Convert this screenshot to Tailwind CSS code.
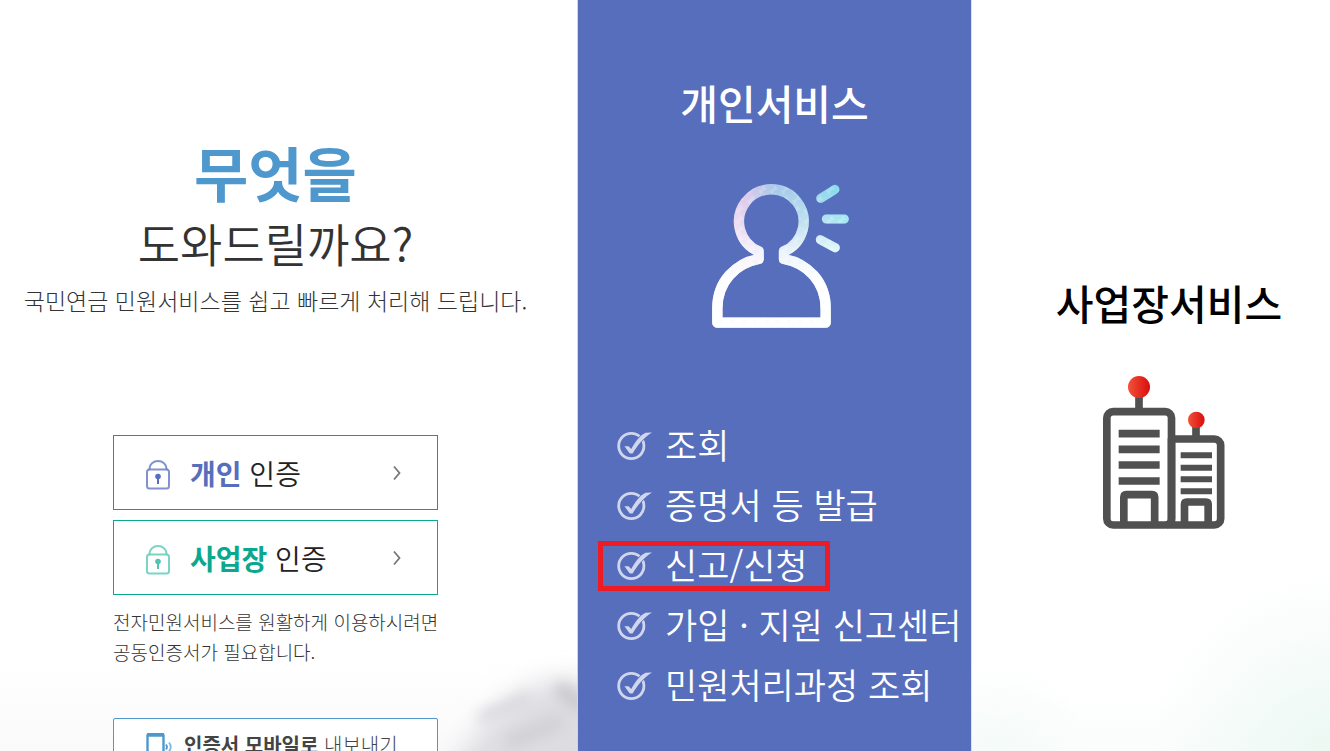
<!DOCTYPE html>
<html lang="ko">

<head>
  <meta charset="UTF-8" />
  <meta name="viewport" content="width=device-width, initial-scale=1.0" />
  <title>전자민원서비스</title>
  <script src="https://cdn.jsdelivr.net/npm/@tailwindcss/browser@4"></script>
</head>

<body class="bg-white font-['Noto_Sans_CJK_KR','Noto_Sans',sans-serif]">
  <!-- Shared shapes -->
  <svg class="hidden" aria-hidden="true">
    <symbol id="lock" viewBox="0 0 24 30">
      <path d="M3.5 9.5V8.5a8.5 7.5 0 0 1 17 0v1" fill="none" stroke="currentColor" stroke-width="2" opacity=".75" />
      <rect x="1" y="9.5" width="22" height="19" rx="2.5" fill="none" stroke="currentColor" stroke-width="2" opacity=".75" />
      <circle cx="12" cy="16.5" r="2.8" fill="currentColor" />
      <path d="M12 17v7" stroke="currentColor" stroke-width="2" />
    </symbol>
    <symbol id="check" viewBox="0 0 36 30">
      <circle cx="14.3" cy="15" r="12.6" fill="none" stroke="#d0d6ed" stroke-width="2.8" />
      <path d="M7.4 15.2H11.6L14.2 18C18 11 23 4.2 28.500 1.7L35 1.4C26.8 6.5 20.500 14 15.600 22.500H12.800Z" fill="#d0d6ed" stroke="#576ebd" stroke-width="1.6" paint-order="stroke" />
    </symbol>
    <symbol id="arrow" viewBox="0 0 8 16">
      <path d="M1 1.5L6.5 8L1 14.5" fill="none" stroke="#777" stroke-width="1.8" />
    </symbol>
  </svg>

  <main class="grid h-screen grid-cols-[578fr_394fr_358fr] overflow-hidden">

    <!-- Intro and sign-in -->
    <section class="relative flex flex-col items-center overflow-hidden border-r border-gray-300 bg-linear-to-b from-white from-88% to-[#fafafb] pt-[137px] pr-[26px]">
      <svg class="absolute right-0 bottom-0 h-[150px] w-[220px]" viewBox="0 0 220 150" aria-hidden="true">
        <defs>
          <filter id="haze" x="-50%" y="-50%" width="200%" height="200%">
            <feGaussianBlur stdDeviation="14" />
          </filter>
          <filter id="hazeThin" x="-60%" y="-150%" width="220%" height="400%">
            <feGaussianBlur stdDeviation="7" />
          </filter>
        </defs>
        <path d="M85 180L130 120L170 88L205 78L250 86V180Z" fill="#dddde1" filter="url(#haze)" />
        <path d="M122 118L172 96" stroke="#d4d4da" stroke-width="10" filter="url(#hazeThin)" />
        <path d="M200 86L228 106" stroke="#c6c6cc" stroke-width="14" filter="url(#hazeThin)" />
        <path d="M150 142L205 120" stroke="#d0d0d4" stroke-width="14" filter="url(#hazeThin)" />
      </svg>

      <h1 class="text-center">
        <span class="block text-[59px] leading-[70px] font-bold text-[#4f98cd]">무엇을</span>
        <span class="block text-[46px] leading-[70px] font-[350] text-[#333]">도와드릴까요?</span>
      </h1>
      <p class="mt-[3px] text-[23px] leading-10 font-light whitespace-nowrap text-[#333]">국민연금 민원서비스를 쉽고 빠르게 처리해 드립니다.</p>

      <div class="relative mt-[115px] flex w-[325px] flex-col gap-[10px]">
        <button type="button" class="flex h-[75px] items-center border border-[#576ebd] bg-white pr-9 pl-8 text-[28px] text-[#222]">
          <svg class="mt-1 h-[30px] w-6 text-[#576ebd]"><use href="#lock" /></svg>
          <span class="ml-5 font-[350]"><strong class="font-bold text-[#576ebd]">개인</strong> 인증</span>
          <svg class="ml-auto h-4 w-2"><use href="#arrow" /></svg>
        </button>
        <button type="button" class="flex h-[75px] items-center border border-[#0aa88f] bg-white pr-9 pl-8 text-[28px] text-[#222]">
          <svg class="mt-1 h-[30px] w-6 text-[#4fc4b0]"><use href="#lock" /></svg>
          <span class="ml-5 font-[350]"><strong class="font-bold text-[#0aa88f]">사업장</strong> 인증</span>
          <svg class="ml-auto h-4 w-2"><use href="#arrow" /></svg>
        </button>
      </div>

      <div class="relative mt-3 w-[325px]">
        <p class="text-[19px] leading-[30px] font-light whitespace-nowrap text-[#333]">전자민원서비스를 원활하게 이용하시려면<br>공동인증서가 필요합니다.</p>
        <button type="button" class="mt-[51px] flex h-[54px] w-full items-center rounded-xs border border-[#4f98cd] bg-white px-8 text-xl text-[#444]">
          <svg class="h-6 w-7" viewBox="0 0 28 24" fill="none" stroke="#4f98cd" aria-hidden="true">
            <rect x="1.5" y="1" width="16" height="22" rx="1.5" stroke-width="2.4" />
            <path d="M1 2h17" stroke-width="3.500" />
            <path d="M20 11.5q2 2.500 0 5" stroke-width="1.8" />
            <path d="M23 9.500q3.500 4.500 0 9" stroke-width="1.8" opacity=".7" />
          </svg>
          <span class="ml-[10px] font-light"><strong class="font-bold">인증서 모바일로</strong> 내보내기</span>
        </button>
      </div>
    </section>

    <!-- Personal services -->
    <section class="flex flex-col items-center border-r border-[#dcdff0] bg-[#576ebd] pt-[72px] text-white">
      <h2 class="text-[41px] leading-[60px] font-medium">개인서비스</h2>
      <svg class="mt-[50px] ml-[10px] h-[148px] w-[140px]" viewBox="60 36 420 444" fill="none" aria-hidden="true">
        <defs>
          <linearGradient id="tint" gradientUnits="userSpaceOnUse" x1="132" y1="0" x2="478" y2="0">
            <stop offset="0" stop-color="#e6cbea" />
            <stop offset=".15" stop-color="#d4c8ea" />
            <stop offset=".35" stop-color="#a9c9ea" />
            <stop offset=".62" stop-color="#a6d3ea" />
            <stop offset="1" stop-color="#80dff0" />
          </linearGradient>
          <linearGradient id="fade" gradientUnits="userSpaceOnUse" x1="0" y1="60" x2="0" y2="330">
            <stop offset="0" stop-color="#fff" stop-opacity="0" />
            <stop offset=".35" stop-color="#fff" stop-opacity=".3" />
            <stop offset=".7" stop-color="#fff" stop-opacity=".8" />
            <stop offset="1" stop-color="#fff" />
          </linearGradient>
          <pattern id="facets" width="34" height="30" patternUnits="userSpaceOnUse">
            <path d="M0 0H17L8 15Z M17 15L26 30H8Z" fill="#fff" fill-opacity=".18" />
            <path d="M34 0L26 15L17 0Z" fill="#7fb4e0" fill-opacity=".04" />
          </pattern>
          <!-- the neck stays open between head and body -->
          <g id="person" stroke-linecap="round" stroke-linejoin="round">
            <path stroke-width="31" d="M206 267V244A97 97 0 1 1 282 244V267C352 280 407 335 407 415V458H82V415C82 335 137 280 206 267Z" />
            <path stroke-width="27" d="M392 85L435 58M409 147H463M391 209L436 233" />
          </g>
        </defs>
        <use href="#person" stroke="url(#tint)" />
        <use href="#person" stroke="url(#fade)" />
        <use href="#person" stroke="url(#facets)" />
      </svg>

      <ul class="mt-[91px] w-full pl-5 text-[35px] leading-[46px] font-[350] whitespace-nowrap">
        <li class="mb-[10px]">
          <a href="#" class="flex h-[50px] w-fit items-center gap-3 pl-[19px]"><svg class="h-[30px] w-9"><use href="#check" /></svg><span class="pb-1">조회</span></a>
        </li>
        <li class="mb-[10px]">
          <a href="#" class="flex h-[50px] w-fit items-center gap-3 pl-[19px]"><svg class="h-[30px] w-9"><use href="#check" /></svg><span class="pb-1">증명서 등 발급</span></a>
        </li>
        <li class="mb-[10px]">
          <a href="#" class="flex h-[50px] w-[232px] items-center gap-3 border-5 border-[#ed1c24] pl-[14px]"><svg class="h-[30px] w-9"><use href="#check" /></svg><span class="pb-1">신고/신청</span></a>
        </li>
        <li class="mb-[10px]">
          <a href="#" class="flex h-[50px] w-fit items-center gap-3 pl-[19px]"><svg class="h-[30px] w-9"><use href="#check" /></svg><span class="pb-1">가입 · 지원 신고센터</span></a>
        </li>
        <li>
          <a href="#" class="flex h-[50px] w-fit items-center gap-3 pl-[19px]"><svg class="h-[30px] w-9"><use href="#check" /></svg><span class="pb-1">민원처리과정 조회</span></a>
        </li>
      </ul>
    </section>

    <!-- Workplace services -->
    <section class="flex flex-col items-center bg-[radial-gradient(circle_at_100%_100%,#ecf8f3,transparent_180px),radial-gradient(circle_at_8%_100%,#f5fbf9,transparent_90px),linear-gradient(#fff_92%,#fafdfc)] pt-[272px] pl-9">
      <h2 class="text-[41px] leading-[60px] font-medium text-black">사업장서비스</h2>
      <svg class="mt-[43px] mr-[10px] h-[155px] w-[124px]" viewBox="37 30 372 465" fill="none" aria-hidden="true">
        <defs>
          <linearGradient id="lamp">
            <stop offset="0" stop-color="#f25238" />
            <stop offset="1" stop-color="#d90d0d" />
          </linearGradient>
        </defs>
        <g stroke="#505050" stroke-width="23">
          <path d="M148 90V140M319 180V220" />
          <rect x="51.5" y="140" width="194" height="340" rx="19" />
          <path d="M245.500 222H374A19 19 0 0 1 393 241V461A19 19 0 0 1 374 480H230M245.500 220V480" />
          <path d="M102.500 480V397Q102.500 389 110 389H187Q195 389 195 397V480" />
          <path d="M284.500 480V418Q284.500 411 291 411H349Q355.500 411 355.500 418V480" />
          <path d="M87 206H210M87 253H210M87 300H210M87 348H210" />
          <path stroke-width="18" d="M273 271H367M273 308H367M273 343H367M273 379H367" />
        </g>
        <circle cx="148" cy="66" r="33" fill="url(#lamp)" />
        <circle cx="320" cy="165" r="25" fill="url(#lamp)" />
      </svg>
    </section>

  </main>
</body>

</html>
